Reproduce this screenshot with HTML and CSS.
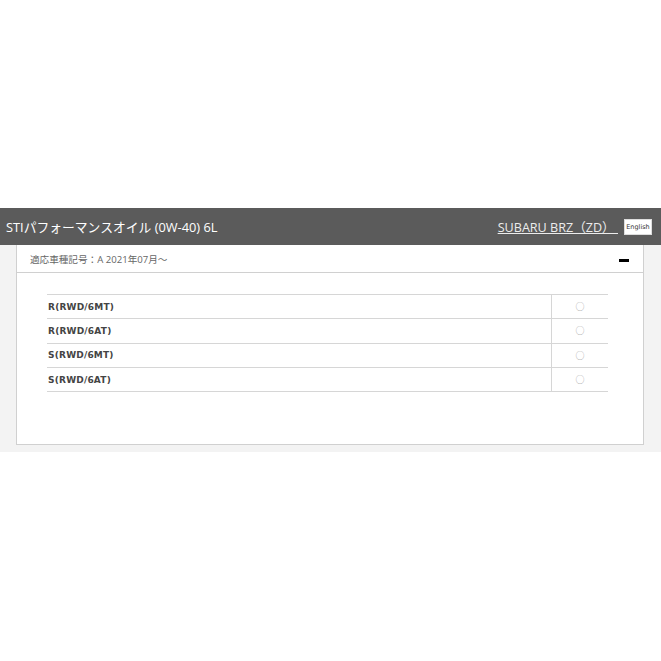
FILE: index.html
```html
<!DOCTYPE html>
<html lang="ja">
<head>
    <meta charset="UTF-8">
    <meta name="viewport" content="width=device-width, initial-scale=1.0">
    <title>STIパフォーマンスオイル 適合表</title>
    <link rel="stylesheet" href="styles.css">
</head>
<body>
    <!-- Product header -->
    <div class="product-bar">
        <h1 class="product-title">STIパフォーマンスオイル (0W-40) 6L</h1>
        <div class="product-links">
            <a href="#" class="car-link">SUBARU BRZ（ZD）&nbsp;</a>
            <button type="button" class="lang-btn">English</button>
        </div>
    </div>

    <!-- Fitment panel -->
    <div class="fit-area">
        <div class="fit-panel">
            <div class="fit-head">
                <span>適応車種記号：A 2021年07月～</span>
                <span class="toggle"></span>
            </div>
            <table class="fit-table">
                <tr><td class="grade">R(RWD/6MT)</td><td class="mark">○</td></tr>
                <tr><td class="grade">R(RWD/6AT)</td><td class="mark">○</td></tr>
                <tr><td class="grade">S(RWD/6MT)</td><td class="mark">○</td></tr>
                <tr><td class="grade">S(RWD/6AT)</td><td class="mark">○</td></tr>
            </table>
        </div>
    </div>
</body>
</html>
```

FILE: styles.css
```css
/* Basic page */
body {
    margin: 0;
    padding-top: 208px;
    font-family: "Open Sans", "Noto Sans CJK JP", sans-serif;
    background-color: #fff;
    color: #333;
}

/* Product header bar */
.product-bar {
    background-color: #5b5b5b;
    height: 37px;
    display: flex;
    align-items: center;
    justify-content: space-between;
    padding: 0 9px 0 6px;
}

.product-title {
    margin: 0;
    font-size: 12.8px;
    font-weight: normal;
    color: #fff;
}

.product-links {
    display: flex;
    align-items: center;
    gap: 6px;
}

.car-link {
    color: #ececec;
    font-size: 12.6px;
    text-decoration: underline;
}

.lang-btn {
    width: 28px;
    height: 16px;
    padding: 0;
    border: 1px solid #ddd;
    background-color: #fff;
    font-family: "DejaVu Sans", sans-serif;
    font-size: 6.5px;
    color: #333;
}

/* Fitment panel */
.fit-area {
    background-color: #f3f3f3;
    padding: 0 17px 7px 16px;
}

.fit-panel {
    background-color: #fff;
    border: 1px solid #d0d0d0;
    border-top: none;
    height: 199px;
}

.fit-head {
    display: flex;
    justify-content: space-between;
    align-items: center;
    height: 27px;
    padding: 0 14px 0 13px;
    border-bottom: 1px solid #d0d0d0;
    font-size: 9.6px;
    color: #666;
}

.toggle {
    width: 10px;
    height: 3px;
    background-color: #000;
    margin-top: 3px;
}

.fit-table {
    border-collapse: collapse;
    margin: 21px 0 0 30px;
    width: 561px;
}

.fit-table td {
    height: 23.3px;
    border-top: 1px solid #d6d6d6;
    border-bottom: 1px solid #d6d6d6;
    padding: 0;
}

.grade {
    font-family: "DejaVu Sans", sans-serif;
    font-size: 9px;
    font-weight: bold;
    letter-spacing: 0.2px;
    color: #444;
    padding-left: 1px !important;
}

.mark {
    width: 56px;
    border-left: 1px solid #d6d6d6;
    text-align: center;
    font-size: 9px;
    color: #aaa;
}
```
